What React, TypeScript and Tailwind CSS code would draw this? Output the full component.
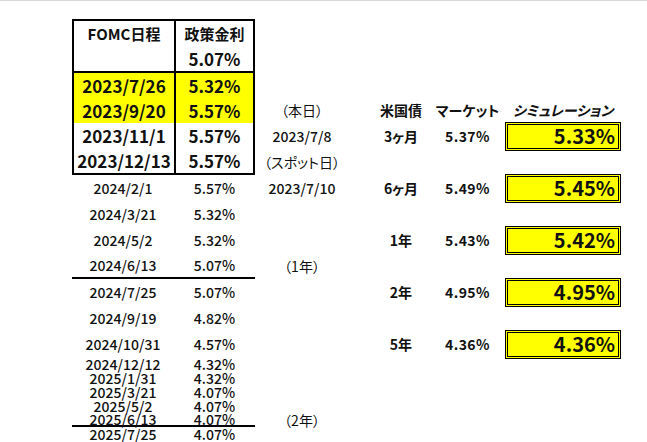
import React from 'react';

// data
const head = ['FOMC日程', '政策金利'];

const blocks = [
  { cls: 'bg-[#ffff00]', rows: [['2023/7/26', '5.32%'], ['2023/9/20', '5.57%']] },
  { cls: '', rows: [['2023/11/1', '5.57%'], ['2023/12/13', '5.57%']] },
];

const schedule = [
  { date: '2024/2/1', rate: '5.57%' },
  { date: '2024/3/21', rate: '5.32%' },
  { date: '2024/5/2', rate: '5.32%' },
  { date: '2024/6/13', rate: '5.07%', rule: true },
  { date: '2024/7/25', rate: '5.07%' },
  { date: '2024/9/19', rate: '4.82%' },
  { date: '2024/10/31', rate: '4.57%' },
  { date: '2024/12/12', rate: '4.32%' },
  { date: '2025/1/31', rate: '4.32%' },
  { date: '2025/3/21', rate: '4.07%' },
  { date: '2025/5/2', rate: '4.07%' },
  { date: '2025/6/13', rate: '4.07%', rule: true },
  { date: '2025/7/25', rate: '4.07%' },
];

const notes = [
  { text: '（本日）', cls: 'row-start-4 text-[14px]' },
  { text: '2023/7/8', cls: 'row-start-5 text-[14px] font-medium' },
  { text: '（スポット日）', cls: 'row-start-6 text-[14px]' },
  { text: '2023/7/10', cls: 'row-start-7 text-[14px] font-medium' },
  { text: '（1年）', cls: 'row-start-10 text-[14px]' },
  { text: '（2年）', cls: 'row-start-18 text-[14px]' },
];

const bonds = [
  { term: '3ヶ月', market: '5.37%', sim: '5.33%', row: 'row-start-5' },
  { term: '6ヶ月', market: '5.49%', sim: '5.45%', row: 'row-start-7' },
  { term: '1年', market: '5.43%', sim: '5.42%', row: 'row-start-9' },
  { term: '2年', market: '4.95%', sim: '4.95%', row: 'row-start-11' },
  { term: '5年', market: '4.36%', sim: '4.36%', row: 'row-start-13' },
];

const cell = 'flex items-center justify-center leading-none whitespace-nowrap';

// markup
const App = () => (
  <div className="h-[442px] overflow-hidden bg-white border-t border-[#d9d9d9] pt-[18px] text-[#111] font-['Noto_Sans_CJK_JP',sans-serif] [font-feature-settings:'palt']">
    <div className="grid grid-cols-[72px_102px_81px_94px_16px_72px_61px_7px_116px] grid-rows-[repeat(13,26px)_repeat(6,14px)]">
      {/* FOMC table */}
      <div className="col-start-2 col-span-2 row-start-1 row-span-6 border-2 border-black flex flex-col">
        <div className="flex-1 grid grid-cols-[100px_1fr] grid-rows-2 border-b-2 border-black font-bold">
          <div className={`${cell} text-[15px]`}>{head[0]}</div>
          <div className={`${cell} text-[15px] border-l-2 border-black`}>{head[1]}</div>
          <div className={cell}></div>
          <div className={`${cell} text-[17px] border-l-2 border-black`}>5.07%</div>
        </div>
        {blocks.map((b, i) => (
          <div key={i} className={`flex-1 grid grid-cols-[100px_1fr] grid-rows-2 font-bold text-[17px] ${b.cls}`}>
            {b.rows.map(([d, r]) => (
              <React.Fragment key={d}>
                <div className={cell}>{d}</div>
                <div className={`${cell} border-l-2 border-black`}>{r}</div>
              </React.Fragment>
            ))}
          </div>
        ))}
      </div>

      {/* later meetings */}
      <div className="col-start-2 col-span-2 row-start-7 row-span-13 grid grid-rows-subgrid grid-cols-[102px_81px] text-[14px] font-medium">
        {schedule.map((s) => (
          <React.Fragment key={s.date}>
            <div className={`${cell} ${s.rule ? 'border-b-2 border-black' : ''}`}>{s.date}</div>
            <div className={`${cell} ${s.rule ? 'border-b-2 border-black' : ''}`}>{s.rate}</div>
          </React.Fragment>
        ))}
      </div>

      {/* notes */}
      {notes.map((n) => (
        <div key={n.text} className={`col-start-4 ${cell} ${n.cls}`}>{n.text}</div>
      ))}

      {/* bonds */}
      <div className={`col-start-6 row-start-4 ${cell} text-[14px] font-bold`}>米国債</div>
      <div className={`col-start-7 row-start-4 ${cell} text-[14px] font-bold`}>マーケット</div>
      <div className={`col-start-9 row-start-4 ${cell} text-[14px] font-bold italic`}>シミュレーション</div>
      {bonds.map((b) => (
        <React.Fragment key={b.term}>
          <div className={`col-start-6 ${b.row} ${cell} text-[14px] font-bold`}>{b.term}</div>
          <div className={`col-start-7 ${b.row} ${cell} text-[14px] font-bold tracking-[0.4px]`}>{b.market}</div>
          <div className={`col-start-9 ${b.row} self-center h-[29px] -my-[2px] border-[3px] border-double border-black bg-[#ffff00] flex items-center justify-end pr-[3px] text-[20px] font-bold leading-none`}>
            {b.sim}
          </div>
        </React.Fragment>
      ))}
    </div>
  </div>
);

export default App;
